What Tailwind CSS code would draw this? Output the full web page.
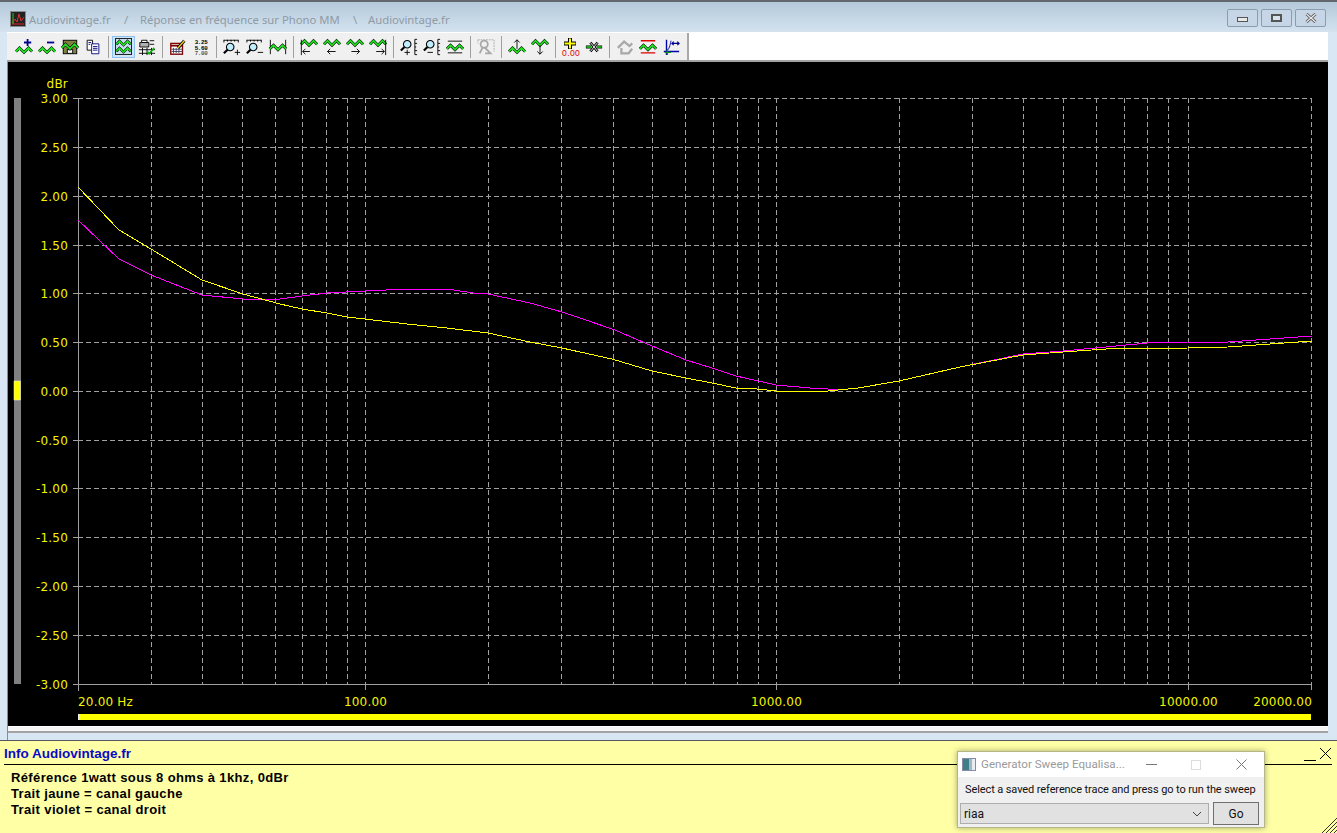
<!DOCTYPE html>
<html lang="fr">
<head>
  <meta charset="UTF-8">
  <title>Audiovintage.fr</title>
  <script src="https://cdn.jsdelivr.net/npm/@tailwindcss/browser@4"></script>
</head>
<body class="bg-[#ffffa6]">
  <!-- shared icon parts -->
  <svg width="0" height="0" class="absolute">
    <defs>
      <g id="wave"><path d="M1 6 5 2 10 7 15 2 19 6" fill="none" stroke="#000" stroke-width="3.1"/><path d="M1 6 5 2 10 7 15 2 19 6" fill="none" stroke="#1ee01e" stroke-width="2"/></g>
      <g id="lens"><path d="M2 18 6 14" stroke="#000" stroke-width="2.4"/><circle cx="9" cy="11" r="4.2" fill="#bfeeff" stroke="#000" stroke-width="1.2"/></g>
    </defs>
  </svg>

  <div class="relative w-[1337px] h-[833px] overflow-hidden flex flex-col font-['Liberation_Sans',sans-serif]">
    <!-- main window -->
    <div class="h-[741px] flex flex-col bg-[#d9e6f3] border-t-[2px] border-t-[#62676d] border-b border-b-[#55595e] shrink-0">
      <!-- title bar -->
      <div class="h-[30px] flex items-center pl-[10px] pr-[11px] bg-gradient-to-b from-[#b4c9da] to-[#d4e2ef] shrink-0">
        <svg width="16" height="16" viewBox="0 0 16 16" class="mt-[4px]">
          <rect x=".5" y=".5" width="15" height="15" fill="#222" stroke="#8a8a8a"/>
          <path d="M2 13H14" stroke="#e02020"/>
          <path d="M2 12 5 8 7 11 9 3 11 10 14 6" fill="none" stroke="#e03030"/>
          <path d="M3 2V13" stroke="#30c030"/>
        </svg>
        <div class="ml-[3px] mt-[6px] flex whitespace-nowrap text-[11.3px] text-[#8f9ba6] font-['Noto_Sans',sans-serif]">
          <span class="w-[95px]">Audiovintage.fr</span>
          <span class="w-[16px]">/</span>
          <span class="w-[213px]">Réponse en fréquence sur Phono MM</span>
          <span class="w-[15px]">\</span>
          <span>Audiovintage.fr</span>
        </div>
        <div class="ml-auto flex gap-[3px] mt-[2px]">
          <div class="w-[31px] h-[18px] rounded-[2px] border border-[#8b9cb0] bg-[#c6d6e6] flex items-center justify-center"><div class="w-[11px] h-[5px] mt-[2px] bg-[#e8e8e8] border border-[#555]"></div></div>
          <div class="w-[31px] h-[18px] rounded-[2px] border border-[#8b9cb0] bg-[#c6d6e6] flex items-center justify-center"><div class="w-[11px] h-[8px] border-2 border-[#555] bg-[#d8e2ec]"></div></div>
          <div class="w-[31px] h-[18px] rounded-[2px] border border-[#8b9cb0] bg-[#c6d6e6] flex items-center justify-center">
            <svg width="12" height="10" viewBox="0 0 12 10"><path d="M1.5 1 10.5 9M10.5 1 1.5 9" stroke="#555" stroke-width="3"/><path d="M1.5 1 10.5 9M10.5 1 1.5 9" stroke="#eee" stroke-width="1.2"/></svg>
          </div>
        </div>
      </div>

      <!-- toolbar -->
      <div class="h-[30px] ml-[7px] mr-[9px] flex bg-white border-b-[2px] border-b-[#a3a3a3] border-t border-t-[#fff] shrink-0">
        <div class="w-[682px] flex items-center pl-[5px] bg-[#f0f0f0] border-r-[2px] border-r-[#a8a8a8]">
          <!-- trace add / remove -->
          <div class="w-[23px] h-[22px] flex items-center justify-center"><svg width="18" height="18" viewBox="0 0 20 20"><use href="#wave" y="9"/><path d="M14 1V9M10 5H18" stroke="#000090" stroke-width="2"/></svg></div>
          <div class="w-[23px] h-[22px] flex items-center justify-center"><svg width="18" height="18" viewBox="0 0 20 20"><use href="#wave" y="9"/><path d="M10 5H18" stroke="#000090" stroke-width="2"/></svg></div>
          <div class="w-[23px] h-[22px] flex items-center justify-center"><svg width="18" height="18" viewBox="0 0 20 20"><rect x="2.5" y="2.5" width="15" height="15" fill="#808040" stroke="#000"/><rect x="7" y="13" width="6" height="4" fill="#fff" stroke="#000"/><use href="#wave" y="5"/></svg></div>
          <div class="w-[23px] h-[22px] flex items-center justify-center"><svg width="18" height="18" viewBox="0 0 20 20"><path d="M3.5 2.5H9.5V13.5H3.5Z" fill="#fff" stroke="#000"/><path d="M8.5 6.5H16.5V17.5H8.5Z" fill="#fff" stroke="#000080"/><path d="M10 9.5H15M10 11.5H15M10 13.5H15M5 5H8M5 7H7" stroke="#000080"/></svg></div>
          <div class="w-[1px] h-[22px] mx-[3.5px] bg-[#a0a0a0]"></div>
          <!-- display -->
          <div class="w-[23px] h-[22px] flex items-center justify-center bg-[#cfe4f7] border border-[#8cc0ee]"><svg width="17" height="17" viewBox="0 0 17 17"><rect x=".5" y=".5" width="16" height="16" fill="#c4ddee" stroke="#222"/><use href="#wave" transform="translate(.5 1.5) scale(.8)"/><use href="#wave" transform="translate(.5 8.5) scale(.8)"/></svg></div>
          <div class="w-[23px] h-[22px] flex items-center justify-center"><svg width="18" height="18" viewBox="0 0 20 20"><path d="M2 5H12V10H2Z" fill="#b0b0b0" stroke="#000"/><path d="M4 2.5H10V5H4Z" fill="#fff" stroke="#000"/><path d="M13 3H18M13 7H18M1 13H19M1 17H19M5 11V19M10 11V19M15 11V19" stroke="#000"/><path d="M10 15 12.500 17.500 18 11" fill="none" stroke="#10b010" stroke-width="2"/></svg></div>
          <div class="w-[1px] h-[22px] mx-[3.5px] bg-[#a0a0a0]"></div>
          <!-- table, numbers -->
          <div class="w-[23px] h-[22px] flex items-center justify-center"><svg width="18" height="18" viewBox="0 0 20 20"><rect x="2" y="6" width="13" height="12" fill="#fff" stroke="#800000" stroke-width="1.500"/><path d="M2 8.500H15" stroke="#800000" stroke-width="2"/><path d="M5 11V17M8 11V17M11 11V17M3 12.500H15M3 15H15" stroke="#404060"/><path d="M10 11 17 3" stroke="#000" stroke-width="3.400"/><path d="M10 11 17 3" stroke="#f0d020" stroke-width="1.600"/></svg></div>
          <div class="w-[23px] h-[22px] flex items-center justify-center"><svg width="18" height="18" viewBox="0 0 20 20" class="font-['Liberation_Mono',monospace] font-bold"><text x="3" y="7" font-size="6.500" letter-spacing="-.4">3.25</text><text x="3" y="13" font-size="6.500" letter-spacing="-.4">5.60</text><text x="3" y="19" font-size="6.500" letter-spacing="-.4" fill="#555">7.00</text></svg></div>
          <div class="w-[1px] h-[22px] mx-[3.5px] bg-[#a0a0a0]"></div>
          <!-- zoom x -->
          <div class="w-[23px] h-[22px] flex items-center justify-center"><svg width="18" height="18" viewBox="0 0 20 20"><path d="M1 2.500H17M1 2V5M5 2V4M9 2V4M13 2V4M17 2V5" stroke="#000"/><use href="#lens" x="-1" y="-1"/><path d="M16 13V19M13 16H19" stroke="#000"/></svg></div>
          <div class="w-[23px] h-[22px] flex items-center justify-center"><svg width="18" height="18" viewBox="0 0 20 20"><path d="M1 2.500H17M1 2V5M5 2V4M9 2V4M13 2V4M17 2V5" stroke="#000"/><use href="#lens" x="-1" y="-1"/><path d="M13 16H19" stroke="#000"/></svg></div>
          <div class="w-[23px] h-[22px] flex items-center justify-center"><svg width="18" height="18" viewBox="0 0 20 20"><path d="M1.500 2V18M18.500 2V18" stroke="#000"/><use href="#wave" y="6"/></svg></div>
          <div class="w-[1px] h-[22px] mx-[3.5px] bg-[#a0a0a0]"></div>
          <!-- move trace -->
          <div class="w-[23px] h-[22px] flex items-center justify-center"><svg width="18" height="18" viewBox="0 0 20 20"><use href="#wave" y="1"/><path d="M1.500 2V19M3 15H11M6 12 3 15 6 18" fill="none" stroke="#000"/></svg></div>
          <div class="w-[23px] h-[22px] flex items-center justify-center"><svg width="18" height="18" viewBox="0 0 20 20"><use href="#wave" y="1"/><path d="M5 15H14M8 12 5 15 8 18" fill="none" stroke="#000"/></svg></div>
          <div class="w-[23px] h-[22px] flex items-center justify-center"><svg width="18" height="18" viewBox="0 0 20 20"><use href="#wave" y="1"/><path d="M6 15H15M12 12 15 15 12 18" fill="none" stroke="#000"/></svg></div>
          <div class="w-[23px] h-[22px] flex items-center justify-center"><svg width="18" height="18" viewBox="0 0 20 20"><use href="#wave" y="1"/><path d="M18.500 2V19M8 15H17M14 12 17 15 14 18" fill="none" stroke="#000"/></svg></div>
          <div class="w-[1px] h-[22px] mx-[3.5px] bg-[#a0a0a0]"></div>
          <!-- zoom y -->
          <div class="w-[23px] h-[22px] flex items-center justify-center"><svg width="18" height="18" viewBox="0 0 20 20"><path d="M19 1.500H16.500V18.500H19M16.500 6H19M16.500 10H18M16.500 14H19" fill="none" stroke="#000"/><use href="#lens" x="-1" y="-4"/><path d="M8 13V19M5 16H11" stroke="#000"/></svg></div>
          <div class="w-[23px] h-[22px] flex items-center justify-center"><svg width="18" height="18" viewBox="0 0 20 20"><path d="M19 1.500H16.500V18.500H19M16.500 6H19M16.500 10H18M16.500 14H19" fill="none" stroke="#000"/><use href="#lens" x="-1" y="-4"/><path d="M5 16H11" stroke="#000"/></svg></div>
          <div class="w-[23px] h-[22px] flex items-center justify-center"><svg width="18" height="18" viewBox="0 0 20 20"><path d="M2 3.500H18M2 16.500H18" stroke="#000"/><use href="#wave" y="6"/></svg></div>
          <div class="w-[1px] h-[22px] mx-[3.5px] bg-[#a0a0a0]"></div>
          <!-- disabled -->
          <div class="w-[23px] h-[22px] flex items-center justify-center"><svg width="18" height="18" viewBox="0 0 20 20" fill="none" stroke="#a8a8a8"><path d="M1 2H19M19 2V15M1 2V6" stroke-dasharray="2 1"/><circle cx="8" cy="7" r="4" stroke-width="2"/><path d="M6 11 3 17M8 10 15 17H9" stroke-width="2"/></svg></div>
          <div class="w-[1px] h-[22px] mx-[3.5px] bg-[#a0a0a0]"></div>
          <!-- shift trace -->
          <div class="w-[23px] h-[22px] flex items-center justify-center"><svg width="18" height="18" viewBox="0 0 20 20"><use href="#wave" y="9"/><path d="M10 12V2M7 5 10 2 13 5" fill="none" stroke="#000"/></svg></div>
          <div class="w-[23px] h-[22px] flex items-center justify-center"><svg width="18" height="18" viewBox="0 0 20 20"><use href="#wave" y="1"/><path d="M10 8V18M7 15 10 18 13 15" fill="none" stroke="#000"/></svg></div>
          <div class="w-[1px] h-[22px] mx-[3.5px] bg-[#a0a0a0]"></div>
          <!-- reference -->
          <div class="w-[23px] h-[22px] flex items-center justify-center"><svg width="20" height="20" viewBox="0 0 20 20"><path d="M9 1V12M3 6.500H15" stroke="#000" stroke-width="4"/><path d="M9 1.500V11.500M3.500 6.500H14.500" stroke="#ffff00" stroke-width="2"/><text x="1" y="19" font-size="8.500" fill="#e00000" letter-spacing=".4">0.00</text></svg></div>
          <div class="w-[23px] h-[22px] flex items-center justify-center"><svg width="18" height="18" viewBox="0 0 20 20"><path d="M6 5 14 15M14 5 6 15" stroke="#000" stroke-width="3"/><path d="M6 5 14 15M14 5 6 15" stroke="#fff" stroke-width="1"/><path d="M1 10H7M13 10H19" stroke="#000" stroke-width="3.500"/><path d="M1.500 10H7M13 10H18.500" stroke="#1ee01e" stroke-width="1.500"/></svg></div>
          <div class="w-[1px] h-[22px] mx-[3.5px] bg-[#a0a0a0]"></div>
          <!-- last group -->
          <div class="w-[23px] h-[22px] flex items-center justify-center"><svg width="18" height="18" viewBox="0 0 20 20" fill="none" stroke="#a8a8a8" stroke-width="2.500"><path d="M2 11 9 4 15 9 18 6M6 11V17H14L18 12"/></svg></div>
          <div class="w-[23px] h-[22px] flex items-center justify-center"><svg width="18" height="18" viewBox="0 0 20 20"><path d="M2 3H18M2 16.500H18" stroke="#e00000" stroke-width="1.500"/><use href="#wave" y="6"/></svg></div>
          <div class="w-[23px] h-[22px] flex items-center justify-center"><svg width="18" height="18" viewBox="0 0 20 20" fill="none"><path d="M2 15H19M5 2V19" stroke="#0000b0" stroke-width="1.500"/><path d="M5 14C8 13 9 8 10 3" stroke="#0000b0"/><path d="M11 6H19M13 4 11 6 13 8M17 4 19 6 17 8" stroke="#000090" stroke-width="1.300"/><path d="M6 12V19M3 16H10" stroke="#109010" stroke-width="1.500"/></svg></div>
        </div>
      </div>

      <!-- plot -->
      <div class="ml-[7px] mr-[9px] flex-1 flex flex-col border-l border-l-[#8c8c8c]">
        <svg width="1320" height="664" viewBox="8 62 1320 664" class="block bg-black shrink-0 font-['DejaVu_Sans',sans-serif]">
          <!-- level bar -->
          <rect x="14" y="98" width="7" height="586" fill="#808080"/>
          <rect x="14" y="381" width="6.500" height="19" fill="#ffff00" stroke="#eee" stroke-width=".5"/>

          <!-- grid -->
          <g shape-rendering="crispEdges" fill="none" stroke="#a0a0a0">
            <path stroke-dasharray="5 3" d="M78 98.500H1312M78 147.500H1312M78 196.500H1312M78 245.500H1312M78 293.500H1312M78 342.500H1312M78 391.500H1312M78 440.500H1312M78 488.500H1312M78 537.500H1312M78 586.500H1312M78 635.500H1312"/>
            <path stroke-dasharray="5 3" d="M151.500 98V684M202.500 98V684M242.500 98V684M275.500 98V684M302.500 98V684M326.500 98V684M347.500 98V684M365.500 98V684M488.500 98V684M561.500 98V684M613.500 98V684M652.500 98V684M685.500 98V684M713.500 98V684M737.500 98V684M758.500 98V684M776.500 98V684M899.500 98V684M972.500 98V684M1023.500 98V684M1063.500 98V684M1096.500 98V684M1124.500 98V684M1147.500 98V684M1168.500 98V684M1188.500 98V684M1311.500 98V684"/>
            <path d="M78.500 98V691M73 684.500H1312M365.500 684V690M776.500 684V690M1188.500 684V690M1311.500 684V690M73 98.500H78M73 147.500H78M73 196.500H78M73 245.500H78M73 293.500H78M73 342.500H78M73 391.500H78M73 440.500H78M73 488.500H78M73 537.500H78M73 586.500H78M73 635.500H78"/>
          </g>

          <!-- traces -->
          <g shape-rendering="crispEdges" fill="none" stroke-width="1">
            <polyline stroke="#ff00ff" points="78,220 119,259 151,275 202,295 243,299 280,299 302,296 327,293 365,291 407,289 447,289 473,293 488,294 530,303 562,312 580,318 615,330 652,346 686,360 712,368 736,376 776,385 810,388 828,389 848,389 858,388 899,381 960,367 1023,354 1063,351 1106,347 1147,343 1188,342 1228,342 1270,339 1312,336"/>
            <polyline stroke="#ffff00" points="78,187 119,230 151,249 202,280 243,294 280,304 302,309 327,313 347,317 365,319 407,324 447,328 488,333 530,342 562,348 580,352 612,359 652,371 686,378 712,383 736,388 757,389 776,391 828,391 858,388 899,381 960,367 1023,355 1063,352 1106,349 1188,348 1228,347 1270,344 1312,341"/>
          </g>

          <!-- labels -->
          <g fill="#f4f400" font-size="12" text-anchor="end" letter-spacing=".2">
            <text x="68" y="88">dBr</text>
            <text x="68" y="103">3.00</text>
            <text x="68" y="152">2.50</text>
            <text x="68" y="201">2.00</text>
            <text x="68" y="250">1.50</text>
            <text x="68" y="298">1.00</text>
            <text x="68" y="347">0.50</text>
            <text x="68" y="396">0.00</text>
            <text x="68" y="445">-0.50</text>
            <text x="68" y="493">-1.00</text>
            <text x="68" y="542">-1.50</text>
            <text x="68" y="591">-2.00</text>
            <text x="68" y="640">-2.50</text>
            <text x="68" y="689">-3.00</text>
          </g>
          <g fill="#f4f400" font-size="12" letter-spacing=".2">
            <text x="78" y="706">20.00 Hz</text>
            <text x="365.500" y="706" text-anchor="middle">100.00</text>
            <text x="776.500" y="706" text-anchor="middle">1000.00</text>
            <text x="1188.500" y="706" text-anchor="middle">10000.00</text>
            <text x="1312" y="706" text-anchor="end">20000.00</text>
          </g>

          <!-- bottom scroll bar -->
          <rect x="78" y="714" width="1233" height="6" fill="#ffff00"/>
          <path d="M78.500 714V720" stroke="#eee"/>
        </svg>
        <div class="h-[7px] bg-[#f6f6f6] border-t border-t-[#fff] border-b-[2px] border-b-[#a3a3a3] shrink-0"></div>
      </div>
    </div>

    <!-- info panel -->
    <div class="flex-1 relative bg-[#ffffa6] pl-[4px] pr-[5px]">
      <div class="h-[24px] flex items-end pb-[2px] border-b border-b-black text-[13.5px] leading-[16px] font-bold text-[#0a0ac8]">Info Audiovintage.fr</div>
      <div class="pl-[7px] pt-[5px] text-[13px] leading-[16px] font-bold tracking-[.37px] text-black">
        <p>Référence 1watt sous 8 ohms à 1khz, 0dBr</p>
        <p>Trait jaune = canal gauche</p>
        <p>Trait violet = canal droit</p>
      </div>

      <!-- panel controls -->
      <svg width="30" height="14" viewBox="0 0 30 14" class="absolute right-[4px] top-[6px]"><path d="M1 13.500H13M17 1 28 12M28 1 17 12" stroke="#000" fill="none"/></svg>
      <svg width="16" height="16" viewBox="0 0 16 16" class="absolute right-0 bottom-0"><path d="M1 16 16 1M5 16 16 5M9 16 16 9M13 16 16 13" stroke="#333"/></svg>

      <!-- generator dialog -->
      <div class="absolute left-[957px] top-[10px] w-[308px] h-[77px] flex flex-col bg-[#f0f0f0] border border-[#b5b58a] shadow-[0_0_6px_rgba(0,0,0,.35)] font-['Roboto',sans-serif]">
        <div class="h-[25px] flex items-center bg-white pl-[4px] shrink-0">
          <div class="w-[14px] h-[13px] flex border border-[#88a] bg-[#e8edf2]"><div class="w-[6px] bg-[#3e7f86]"></div><div class="w-[3px] bg-[#9fb8c8]"></div></div>
          <span class="ml-[5px] w-[151px] text-[11.6px] text-[#9a9a9a] whitespace-nowrap">Generator Sweep Equalisa...</span>
          <svg width="11" height="11" viewBox="0 0 11 11" class="ml-[14px]"><path d="M0 5.500H11" stroke="#777"/></svg>
          <svg width="10" height="10" viewBox="0 0 10 10" class="ml-[34px]"><rect x=".5" y=".5" width="9" height="9" fill="none" stroke="#ddd"/></svg>
          <svg width="11" height="11" viewBox="0 0 11 11" class="ml-[35px]"><path d="M.5 .5 10.500 10.500M10.500 .5 .5 10.500" stroke="#777"/></svg>
        </div>
        <p class="pl-[7px] mt-[5px] text-[11px] leading-[16px] tracking-[-.1px] text-[#111] whitespace-nowrap">Select a saved reference trace and press go to run the sweep</p>
        <div class="flex gap-[4px] pl-[2px] mt-[5px]">
          <div class="w-[249px] h-[21px] flex items-center justify-between pl-[3px] pr-[6px] bg-[#e1e1e1] border border-[#adadad] text-[12px] text-[#111]">
            <span>riaa</span>
            <svg width="10" height="6" viewBox="0 0 10 6"><path d="M1 1 5 5 9 1" fill="none" stroke="#444"/></svg>
          </div>
          <div class="w-[46px] h-[23px] -mt-[1px] flex items-center justify-center bg-[#e1e1e1] border-[1.500px] border-[#707070] text-[12px] text-[#111]">Go</div>
        </div>
      </div>
    </div>
  </div>
</body>
</html>
